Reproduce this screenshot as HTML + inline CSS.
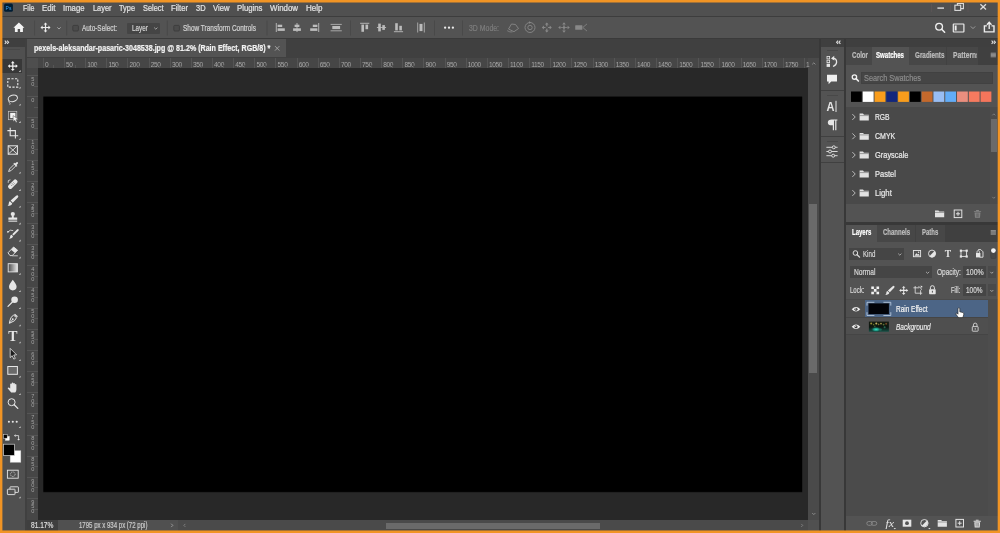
<!DOCTYPE html>
<html lang="en">
<head>
<meta charset="utf-8">
<title>Photoshop - Rain Effect</title>
<style>
html,body{margin:0;padding:0;}
body{width:1000px;height:533px;overflow:hidden;background:#f19424;position:relative;font-family:"Liberation Sans", sans-serif;}
.b{position:absolute;}
#txt{position:absolute;left:0;top:0;width:1000px;height:533px;will-change:transform;}
.t{position:absolute;white-space:pre;line-height:12px;height:12px;font-family:"Liberation Sans", sans-serif;transform-origin:0 50%;-webkit-text-stroke:0.22px currentColor;}
.r{position:absolute;font-size:6.6px;line-height:8px;color:#a6a6a6;white-space:pre;letter-spacing:-0.4px;}
.rv{position:absolute;font-size:5.6px;line-height:5px;height:5px;width:7px;text-align:center;color:#a2a2a2;}
svg{position:absolute;left:0;top:0;overflow:visible;}
</style>
</head>
<body>
<!-- panels & boxes -->
<div class="b" style="left:2.0px;top:2.0px;width:996.0px;height:36.0px;background:#535353;"></div>
<div class="b" style="left:2.0px;top:2.0px;width:996.0px;height:14.2px;background:#505050;"></div>
<div class="b" style="left:2.0px;top:16.2px;width:996.0px;height:1.0px;background:#3d3d3d;"></div>
<div class="b" style="left:127.0px;top:23.3px;width:33.2px;height:10.6px;background:#454545;border-radius:1px;"></div>
<div class="b" style="left:2.0px;top:38.0px;width:996.0px;height:19.6px;background:#404040;"></div>
<div class="b" style="left:2.0px;top:37.6px;width:996.0px;height:1.0px;background:#3a3a3a;"></div>
<div class="b" style="left:2.0px;top:47.0px;width:23.2px;height:484.0px;background:#505050;"></div>
<div class="b" style="left:2.0px;top:38.6px;width:23.2px;height:8.4px;background:#3f3f3f;"></div>
<div class="b" style="left:25.2px;top:38.6px;width:2.2px;height:492.4px;background:#404040;"></div>
<div class="b" style="left:2.0px;top:58.6px;width:20.0px;height:14.0px;background:#383838;"></div>
<div class="b" style="left:7.0px;top:49.0px;width:13.0px;height:1.0px;background:#484848;"></div>
<div class="b" style="left:27.4px;top:39.0px;width:258.6px;height:18.0px;background:#535353;"></div>
<div class="b" style="left:27.4px;top:57.6px;width:791.6px;height:10.8px;background:#464646;"></div>
<div class="b" style="left:27.4px;top:57.6px;width:10.4px;height:462.0px;background:#464646;"></div>
<div class="b" style="left:27.4px;top:57.6px;width:10.4px;height:10.8px;background:#4e4e4e;"></div>
<div class="b" style="left:37.8px;top:68.4px;width:770.2px;height:451.2px;background:#282828;"></div>
<div class="b" style="left:808.0px;top:57.6px;width:11.4px;height:462.0px;background:#4a4a4a;"></div>
<div class="b" style="left:808.8px;top:203.9px;width:8.2px;height:169.6px;background:#6a6a6a;"></div>
<div class="b" style="left:27.4px;top:519.6px;width:792.0px;height:11.4px;background:#505050;"></div>
<div class="b" style="left:27.4px;top:519.6px;width:30.6px;height:11.4px;background:#3f3f3f;"></div>
<div class="b" style="left:178.0px;top:519.6px;width:630.0px;height:11.4px;background:#4a4a4a;"></div>
<div class="b" style="left:386.0px;top:522.6px;width:214.0px;height:6.2px;background:#6a6a6a;"></div>
<div class="b" style="left:819.4px;top:38.6px;width:1.2px;height:492.4px;background:#383838;"></div>
<div class="b" style="left:820.6px;top:47.0px;width:23.6px;height:484.0px;background:#535353;"></div>
<div class="b" style="left:820.6px;top:38.6px;width:23.6px;height:8.4px;background:#3f3f3f;"></div>
<div class="b" style="left:844.2px;top:38.6px;width:1.8px;height:492.4px;background:#383838;"></div>
<div class="b" style="left:820.6px;top:90.2px;width:23.6px;height:1.0px;background:#404040;"></div>
<div class="b" style="left:820.6px;top:136.0px;width:23.6px;height:1.0px;background:#404040;"></div>
<div class="b" style="left:820.6px;top:162.0px;width:23.6px;height:1.0px;background:#404040;"></div>
<div class="b" style="left:826.5px;top:50.3px;width:11.5px;height:0.8px;background:#484848;"></div>
<div class="b" style="left:826.5px;top:95.0px;width:11.5px;height:0.8px;background:#484848;"></div>
<div class="b" style="left:826.5px;top:141.0px;width:11.5px;height:0.8px;background:#484848;"></div>
<div class="b" style="left:846.0px;top:38.6px;width:152.0px;height:8.4px;background:#3f3f3f;"></div>
<div class="b" style="left:846.0px;top:47.0px;width:152.0px;height:17.5px;background:#404040;"></div>
<div class="b" style="left:846.0px;top:47.0px;width:132.0px;height:17.5px;background:#474747;"></div>
<div class="b" style="left:946.0px;top:47.0px;width:1.0px;height:17.5px;background:#414141;"></div>
<div class="b" style="left:871.5px;top:47.0px;width:37.5px;height:17.5px;background:#535353;"></div>
<div class="b" style="left:846.0px;top:64.5px;width:152.0px;height:157.5px;background:#535353;"></div>
<div class="b" style="left:861.0px;top:72.0px;width:132.0px;height:12.2px;background:#454545;box-shadow:inset 0 0 0 1px #414141;"></div>
<div class="b" style="left:846.0px;top:106.7px;width:152.0px;height:96.9px;background:#494949;"></div>
<div class="b" style="left:990.4px;top:106.7px;width:7.6px;height:96.9px;background:#4c4c4c;"></div>
<div class="b" style="left:991.0px;top:119.0px;width:5.6px;height:33.0px;background:#6a6a6a;"></div>
<div class="b" style="left:846.0px;top:222.0px;width:152.0px;height:2.5px;background:#383838;"></div>
<div class="b" style="left:846.0px;top:224.5px;width:152.0px;height:17.5px;background:#404040;"></div>
<div class="b" style="left:846.0px;top:224.5px;width:99.0px;height:17.5px;background:#474747;"></div>
<div class="b" style="left:914.5px;top:224.5px;width:1.0px;height:17.5px;background:#414141;"></div>
<div class="b" style="left:846.0px;top:224.5px;width:30.8px;height:17.5px;background:#535353;"></div>
<div class="b" style="left:846.0px;top:242.0px;width:152.0px;height:289.0px;background:#535353;"></div>
<div class="b" style="left:846.0px;top:299.2px;width:152.0px;height:217.1px;background:#4b4b4b;"></div>
<div class="b" style="left:849.2px;top:248.0px;width:54.8px;height:12.2px;background:#454545;"></div>
<div class="b" style="left:850.0px;top:266.0px;width:82.0px;height:12.4px;background:#454545;"></div>
<div class="b" style="left:963.3px;top:266.0px;width:22.9px;height:12.4px;background:#454545;"></div>
<div class="b" style="left:963.3px;top:284.4px;width:22.9px;height:12.0px;background:#454545;"></div>
<div class="b" style="left:988.0px;top:266.0px;width:7.6px;height:12.4px;background:#4a4a4a;"></div>
<div class="b" style="left:988.0px;top:284.4px;width:7.6px;height:12.0px;background:#4a4a4a;"></div>
<div class="b" style="left:846.0px;top:300.4px;width:142.4px;height:16.7px;background:#4f4f4f;"></div>
<div class="b" style="left:865.4px;top:300.4px;width:123.0px;height:16.7px;background:#4c6586;"></div>
<div class="b" style="left:846.0px;top:317.6px;width:142.4px;height:16.2px;background:#4f4f4f;"></div>
<div class="b" style="left:846.0px;top:317.1px;width:142.4px;height:0.6px;background:#454545;"></div>
<div class="b" style="left:846.0px;top:333.8px;width:142.4px;height:0.6px;background:#454545;"></div>
<div class="b" style="left:988.4px;top:299.2px;width:9.6px;height:217.1px;background:#4d4d4d;"></div>
<svg width="1000" height="533" viewBox="0 0 1000 533"><rect x="43.36" y="97.2" width="758.8" height="395.6" fill="#000" opacity="0.25"/><rect x="43.36" y="96.56" width="758.8" height="395.31" fill="#000"/></svg>
<div id="txt">
<!-- rulers -->
<div class="b" style="left:42.8px;top:57.6px;width:1px;height:10.8px;background:#555555"></div>
<span class="r" style="left:45.0px;top:60.6px;">0</span>
<div class="b" style="left:63.9px;top:57.6px;width:1px;height:10.8px;background:#555555"></div>
<span class="r" style="left:66.1px;top:60.6px;">50</span>
<div class="b" style="left:85.1px;top:57.6px;width:1px;height:10.8px;background:#555555"></div>
<span class="r" style="left:87.3px;top:60.6px;">100</span>
<div class="b" style="left:106.2px;top:57.6px;width:1px;height:10.8px;background:#555555"></div>
<span class="r" style="left:108.4px;top:60.6px;">150</span>
<div class="b" style="left:127.4px;top:57.6px;width:1px;height:10.8px;background:#555555"></div>
<span class="r" style="left:129.6px;top:60.6px;">200</span>
<div class="b" style="left:148.5px;top:57.6px;width:1px;height:10.8px;background:#555555"></div>
<span class="r" style="left:150.7px;top:60.6px;">250</span>
<div class="b" style="left:169.7px;top:57.6px;width:1px;height:10.8px;background:#555555"></div>
<span class="r" style="left:171.9px;top:60.6px;">300</span>
<div class="b" style="left:190.8px;top:57.6px;width:1px;height:10.8px;background:#555555"></div>
<span class="r" style="left:193.0px;top:60.6px;">350</span>
<div class="b" style="left:211.9px;top:57.6px;width:1px;height:10.8px;background:#555555"></div>
<span class="r" style="left:214.1px;top:60.6px;">400</span>
<div class="b" style="left:233.1px;top:57.6px;width:1px;height:10.8px;background:#555555"></div>
<span class="r" style="left:235.3px;top:60.6px;">450</span>
<div class="b" style="left:254.2px;top:57.6px;width:1px;height:10.8px;background:#555555"></div>
<span class="r" style="left:256.4px;top:60.6px;">500</span>
<div class="b" style="left:275.4px;top:57.6px;width:1px;height:10.8px;background:#555555"></div>
<span class="r" style="left:277.6px;top:60.6px;">550</span>
<div class="b" style="left:296.5px;top:57.6px;width:1px;height:10.8px;background:#555555"></div>
<span class="r" style="left:298.7px;top:60.6px;">600</span>
<div class="b" style="left:317.6px;top:57.6px;width:1px;height:10.8px;background:#555555"></div>
<span class="r" style="left:319.8px;top:60.6px;">650</span>
<div class="b" style="left:338.8px;top:57.6px;width:1px;height:10.8px;background:#555555"></div>
<span class="r" style="left:341.0px;top:60.6px;">700</span>
<div class="b" style="left:359.9px;top:57.6px;width:1px;height:10.8px;background:#555555"></div>
<span class="r" style="left:362.1px;top:60.6px;">750</span>
<div class="b" style="left:381.1px;top:57.6px;width:1px;height:10.8px;background:#555555"></div>
<span class="r" style="left:383.3px;top:60.6px;">800</span>
<div class="b" style="left:402.2px;top:57.6px;width:1px;height:10.8px;background:#555555"></div>
<span class="r" style="left:404.4px;top:60.6px;">850</span>
<div class="b" style="left:423.4px;top:57.6px;width:1px;height:10.8px;background:#555555"></div>
<span class="r" style="left:425.6px;top:60.6px;">900</span>
<div class="b" style="left:444.5px;top:57.6px;width:1px;height:10.8px;background:#555555"></div>
<span class="r" style="left:446.7px;top:60.6px;">950</span>
<div class="b" style="left:465.6px;top:57.6px;width:1px;height:10.8px;background:#555555"></div>
<span class="r" style="left:467.8px;top:60.6px;">1000</span>
<div class="b" style="left:486.8px;top:57.6px;width:1px;height:10.8px;background:#555555"></div>
<span class="r" style="left:489.0px;top:60.6px;">1050</span>
<div class="b" style="left:507.9px;top:57.6px;width:1px;height:10.8px;background:#555555"></div>
<span class="r" style="left:510.1px;top:60.6px;">1100</span>
<div class="b" style="left:529.1px;top:57.6px;width:1px;height:10.8px;background:#555555"></div>
<span class="r" style="left:531.3px;top:60.6px;">1150</span>
<div class="b" style="left:550.2px;top:57.6px;width:1px;height:10.8px;background:#555555"></div>
<span class="r" style="left:552.4px;top:60.6px;">1200</span>
<div class="b" style="left:571.4px;top:57.6px;width:1px;height:10.8px;background:#555555"></div>
<span class="r" style="left:573.5px;top:60.6px;">1250</span>
<div class="b" style="left:592.5px;top:57.6px;width:1px;height:10.8px;background:#555555"></div>
<span class="r" style="left:594.7px;top:60.6px;">1300</span>
<div class="b" style="left:613.6px;top:57.6px;width:1px;height:10.8px;background:#555555"></div>
<span class="r" style="left:615.8px;top:60.6px;">1350</span>
<div class="b" style="left:634.8px;top:57.6px;width:1px;height:10.8px;background:#555555"></div>
<span class="r" style="left:637.0px;top:60.6px;">1400</span>
<div class="b" style="left:655.9px;top:57.6px;width:1px;height:10.8px;background:#555555"></div>
<span class="r" style="left:658.1px;top:60.6px;">1450</span>
<div class="b" style="left:677.1px;top:57.6px;width:1px;height:10.8px;background:#555555"></div>
<span class="r" style="left:679.3px;top:60.6px;">1500</span>
<div class="b" style="left:698.2px;top:57.6px;width:1px;height:10.8px;background:#555555"></div>
<span class="r" style="left:700.4px;top:60.6px;">1550</span>
<div class="b" style="left:719.3px;top:57.6px;width:1px;height:10.8px;background:#555555"></div>
<span class="r" style="left:721.5px;top:60.6px;">1600</span>
<div class="b" style="left:740.5px;top:57.6px;width:1px;height:10.8px;background:#555555"></div>
<span class="r" style="left:742.7px;top:60.6px;">1650</span>
<div class="b" style="left:761.6px;top:57.6px;width:1px;height:10.8px;background:#555555"></div>
<span class="r" style="left:763.8px;top:60.6px;">1700</span>
<div class="b" style="left:782.8px;top:57.6px;width:1px;height:10.8px;background:#555555"></div>
<span class="r" style="left:785.0px;top:60.6px;">1750</span>
<div class="b" style="left:803.9px;top:57.6px;width:1px;height:10.8px;background:#555555"></div>
<span class="r" style="left:806.1px;top:60.6px;">1</span>
<div class="b" style="left:27.4px;top:75.1px;width:10.4px;height:1px;background:#555555"></div>
<span class="rv" style="left:29.2px;top:76.9px;">5</span>
<span class="rv" style="left:29.2px;top:81.6px;">0</span>
<div class="b" style="left:27.4px;top:96.2px;width:10.4px;height:1px;background:#555555"></div>
<span class="rv" style="left:29.2px;top:98.0px;">0</span>
<div class="b" style="left:27.4px;top:117.3px;width:10.4px;height:1px;background:#555555"></div>
<span class="rv" style="left:29.2px;top:119.1px;">5</span>
<span class="rv" style="left:29.2px;top:123.8px;">0</span>
<div class="b" style="left:27.4px;top:138.5px;width:10.4px;height:1px;background:#555555"></div>
<span class="rv" style="left:29.2px;top:140.3px;">1</span>
<span class="rv" style="left:29.2px;top:145.0px;">0</span>
<span class="rv" style="left:29.2px;top:149.7px;">0</span>
<div class="b" style="left:27.4px;top:159.6px;width:10.4px;height:1px;background:#555555"></div>
<span class="rv" style="left:29.2px;top:161.4px;">1</span>
<span class="rv" style="left:29.2px;top:166.1px;">5</span>
<span class="rv" style="left:29.2px;top:170.8px;">0</span>
<div class="b" style="left:27.4px;top:180.8px;width:10.4px;height:1px;background:#555555"></div>
<span class="rv" style="left:29.2px;top:182.6px;">2</span>
<span class="rv" style="left:29.2px;top:187.3px;">0</span>
<span class="rv" style="left:29.2px;top:192.0px;">0</span>
<div class="b" style="left:27.4px;top:201.9px;width:10.4px;height:1px;background:#555555"></div>
<span class="rv" style="left:29.2px;top:203.7px;">2</span>
<span class="rv" style="left:29.2px;top:208.4px;">5</span>
<span class="rv" style="left:29.2px;top:213.1px;">0</span>
<div class="b" style="left:27.4px;top:223.1px;width:10.4px;height:1px;background:#555555"></div>
<span class="rv" style="left:29.2px;top:224.9px;">3</span>
<span class="rv" style="left:29.2px;top:229.6px;">0</span>
<span class="rv" style="left:29.2px;top:234.3px;">0</span>
<div class="b" style="left:27.4px;top:244.2px;width:10.4px;height:1px;background:#555555"></div>
<span class="rv" style="left:29.2px;top:246.0px;">3</span>
<span class="rv" style="left:29.2px;top:250.7px;">5</span>
<span class="rv" style="left:29.2px;top:255.4px;">0</span>
<div class="b" style="left:27.4px;top:265.3px;width:10.4px;height:1px;background:#555555"></div>
<span class="rv" style="left:29.2px;top:267.1px;">4</span>
<span class="rv" style="left:29.2px;top:271.8px;">0</span>
<span class="rv" style="left:29.2px;top:276.5px;">0</span>
<div class="b" style="left:27.4px;top:286.5px;width:10.4px;height:1px;background:#555555"></div>
<span class="rv" style="left:29.2px;top:288.3px;">4</span>
<span class="rv" style="left:29.2px;top:293.0px;">5</span>
<span class="rv" style="left:29.2px;top:297.7px;">0</span>
<div class="b" style="left:27.4px;top:307.6px;width:10.4px;height:1px;background:#555555"></div>
<span class="rv" style="left:29.2px;top:309.4px;">5</span>
<span class="rv" style="left:29.2px;top:314.1px;">0</span>
<span class="rv" style="left:29.2px;top:318.8px;">0</span>
<div class="b" style="left:27.4px;top:328.8px;width:10.4px;height:1px;background:#555555"></div>
<span class="rv" style="left:29.2px;top:330.6px;">5</span>
<span class="rv" style="left:29.2px;top:335.3px;">5</span>
<span class="rv" style="left:29.2px;top:340.0px;">0</span>
<div class="b" style="left:27.4px;top:349.9px;width:10.4px;height:1px;background:#555555"></div>
<span class="rv" style="left:29.2px;top:351.7px;">6</span>
<span class="rv" style="left:29.2px;top:356.4px;">0</span>
<span class="rv" style="left:29.2px;top:361.1px;">0</span>
<div class="b" style="left:27.4px;top:371.0px;width:10.4px;height:1px;background:#555555"></div>
<span class="rv" style="left:29.2px;top:372.8px;">6</span>
<span class="rv" style="left:29.2px;top:377.5px;">5</span>
<span class="rv" style="left:29.2px;top:382.2px;">0</span>
<div class="b" style="left:27.4px;top:392.2px;width:10.4px;height:1px;background:#555555"></div>
<span class="rv" style="left:29.2px;top:394.0px;">7</span>
<span class="rv" style="left:29.2px;top:398.7px;">0</span>
<span class="rv" style="left:29.2px;top:403.4px;">0</span>
<div class="b" style="left:27.4px;top:413.3px;width:10.4px;height:1px;background:#555555"></div>
<span class="rv" style="left:29.2px;top:415.1px;">7</span>
<span class="rv" style="left:29.2px;top:419.8px;">5</span>
<span class="rv" style="left:29.2px;top:424.5px;">0</span>
<div class="b" style="left:27.4px;top:434.5px;width:10.4px;height:1px;background:#555555"></div>
<span class="rv" style="left:29.2px;top:436.3px;">8</span>
<span class="rv" style="left:29.2px;top:441.0px;">0</span>
<span class="rv" style="left:29.2px;top:445.7px;">0</span>
<div class="b" style="left:27.4px;top:455.6px;width:10.4px;height:1px;background:#555555"></div>
<span class="rv" style="left:29.2px;top:457.4px;">8</span>
<span class="rv" style="left:29.2px;top:462.1px;">5</span>
<span class="rv" style="left:29.2px;top:466.8px;">0</span>
<div class="b" style="left:27.4px;top:476.8px;width:10.4px;height:1px;background:#555555"></div>
<span class="rv" style="left:29.2px;top:478.6px;">9</span>
<span class="rv" style="left:29.2px;top:483.3px;">0</span>
<span class="rv" style="left:29.2px;top:488.0px;">0</span>
<div class="b" style="left:27.4px;top:497.9px;width:10.4px;height:1px;background:#555555"></div>
<span class="rv" style="left:29.2px;top:499.7px;">9</span>
<span class="rv" style="left:29.2px;top:504.4px;">5</span>
<span class="rv" style="left:29.2px;top:509.1px;">0</span>
<div class="b" style="left:53.4px;top:64.6px;width:0.8px;height:3.8px;background:#565656"></div>
<div class="b" style="left:74.5px;top:64.6px;width:0.8px;height:3.8px;background:#565656"></div>
<div class="b" style="left:95.7px;top:64.6px;width:0.8px;height:3.8px;background:#565656"></div>
<div class="b" style="left:116.8px;top:64.6px;width:0.8px;height:3.8px;background:#565656"></div>
<div class="b" style="left:137.9px;top:64.6px;width:0.8px;height:3.8px;background:#565656"></div>
<div class="b" style="left:159.1px;top:64.6px;width:0.8px;height:3.8px;background:#565656"></div>
<div class="b" style="left:180.2px;top:64.6px;width:0.8px;height:3.8px;background:#565656"></div>
<div class="b" style="left:201.4px;top:64.6px;width:0.8px;height:3.8px;background:#565656"></div>
<div class="b" style="left:222.5px;top:64.6px;width:0.8px;height:3.8px;background:#565656"></div>
<div class="b" style="left:243.6px;top:64.6px;width:0.8px;height:3.8px;background:#565656"></div>
<div class="b" style="left:264.8px;top:64.6px;width:0.8px;height:3.8px;background:#565656"></div>
<div class="b" style="left:285.9px;top:64.6px;width:0.8px;height:3.8px;background:#565656"></div>
<div class="b" style="left:307.1px;top:64.6px;width:0.8px;height:3.8px;background:#565656"></div>
<div class="b" style="left:328.2px;top:64.6px;width:0.8px;height:3.8px;background:#565656"></div>
<div class="b" style="left:349.4px;top:64.6px;width:0.8px;height:3.8px;background:#565656"></div>
<div class="b" style="left:370.5px;top:64.6px;width:0.8px;height:3.8px;background:#565656"></div>
<div class="b" style="left:391.6px;top:64.6px;width:0.8px;height:3.8px;background:#565656"></div>
<div class="b" style="left:412.8px;top:64.6px;width:0.8px;height:3.8px;background:#565656"></div>
<div class="b" style="left:433.9px;top:64.6px;width:0.8px;height:3.8px;background:#565656"></div>
<div class="b" style="left:455.1px;top:64.6px;width:0.8px;height:3.8px;background:#565656"></div>
<div class="b" style="left:476.2px;top:64.6px;width:0.8px;height:3.8px;background:#565656"></div>
<div class="b" style="left:497.4px;top:64.6px;width:0.8px;height:3.8px;background:#565656"></div>
<div class="b" style="left:518.5px;top:64.6px;width:0.8px;height:3.8px;background:#565656"></div>
<div class="b" style="left:539.6px;top:64.6px;width:0.8px;height:3.8px;background:#565656"></div>
<div class="b" style="left:560.8px;top:64.6px;width:0.8px;height:3.8px;background:#565656"></div>
<div class="b" style="left:581.9px;top:64.6px;width:0.8px;height:3.8px;background:#565656"></div>
<div class="b" style="left:603.1px;top:64.6px;width:0.8px;height:3.8px;background:#565656"></div>
<div class="b" style="left:624.2px;top:64.6px;width:0.8px;height:3.8px;background:#565656"></div>
<div class="b" style="left:645.3px;top:64.6px;width:0.8px;height:3.8px;background:#565656"></div>
<div class="b" style="left:666.5px;top:64.6px;width:0.8px;height:3.8px;background:#565656"></div>
<div class="b" style="left:687.6px;top:64.6px;width:0.8px;height:3.8px;background:#565656"></div>
<div class="b" style="left:708.8px;top:64.6px;width:0.8px;height:3.8px;background:#565656"></div>
<div class="b" style="left:729.9px;top:64.6px;width:0.8px;height:3.8px;background:#565656"></div>
<div class="b" style="left:751.1px;top:64.6px;width:0.8px;height:3.8px;background:#565656"></div>
<div class="b" style="left:772.2px;top:64.6px;width:0.8px;height:3.8px;background:#565656"></div>
<div class="b" style="left:793.3px;top:64.6px;width:0.8px;height:3.8px;background:#565656"></div>
<div class="b" style="left:34px;top:85.6px;width:3.8px;height:0.8px;background:#565656"></div>
<div class="b" style="left:34px;top:106.8px;width:3.8px;height:0.8px;background:#565656"></div>
<div class="b" style="left:34px;top:127.9px;width:3.8px;height:0.8px;background:#565656"></div>
<div class="b" style="left:34px;top:149.1px;width:3.8px;height:0.8px;background:#565656"></div>
<div class="b" style="left:34px;top:170.2px;width:3.8px;height:0.8px;background:#565656"></div>
<div class="b" style="left:34px;top:191.3px;width:3.8px;height:0.8px;background:#565656"></div>
<div class="b" style="left:34px;top:212.5px;width:3.8px;height:0.8px;background:#565656"></div>
<div class="b" style="left:34px;top:233.6px;width:3.8px;height:0.8px;background:#565656"></div>
<div class="b" style="left:34px;top:254.8px;width:3.8px;height:0.8px;background:#565656"></div>
<div class="b" style="left:34px;top:275.9px;width:3.8px;height:0.8px;background:#565656"></div>
<div class="b" style="left:34px;top:297.0px;width:3.8px;height:0.8px;background:#565656"></div>
<div class="b" style="left:34px;top:318.2px;width:3.8px;height:0.8px;background:#565656"></div>
<div class="b" style="left:34px;top:339.3px;width:3.8px;height:0.8px;background:#565656"></div>
<div class="b" style="left:34px;top:360.5px;width:3.8px;height:0.8px;background:#565656"></div>
<div class="b" style="left:34px;top:381.6px;width:3.8px;height:0.8px;background:#565656"></div>
<div class="b" style="left:34px;top:402.8px;width:3.8px;height:0.8px;background:#565656"></div>
<div class="b" style="left:34px;top:423.9px;width:3.8px;height:0.8px;background:#565656"></div>
<div class="b" style="left:34px;top:445.0px;width:3.8px;height:0.8px;background:#565656"></div>
<div class="b" style="left:34px;top:466.2px;width:3.8px;height:0.8px;background:#565656"></div>
<div class="b" style="left:34px;top:487.3px;width:3.8px;height:0.8px;background:#565656"></div>
<div class="b" style="left:34px;top:508.5px;width:3.8px;height:0.8px;background:#565656"></div>
<!-- text -->
<span class="t" style="left:23.0px;top:2.3px;font-size:8.8px;color:#e2e2e2;transform:scaleX(0.8106);">File</span>
<span class="t" style="left:42.0px;top:2.3px;font-size:8.8px;color:#e2e2e2;transform:scaleX(0.8898);">Edit</span>
<span class="t" style="left:63.0px;top:2.3px;font-size:8.8px;color:#e2e2e2;transform:scaleX(0.8792);">Image</span>
<span class="t" style="left:92.5px;top:2.3px;font-size:8.8px;color:#e2e2e2;transform:scaleX(0.8403);">Layer</span>
<span class="t" style="left:119.0px;top:2.3px;font-size:8.8px;color:#e2e2e2;transform:scaleX(0.8387);">Type</span>
<span class="t" style="left:142.5px;top:2.3px;font-size:8.8px;color:#e2e2e2;transform:scaleX(0.8383);">Select</span>
<span class="t" style="left:170.5px;top:2.3px;font-size:8.8px;color:#e2e2e2;transform:scaleX(0.8690);">Filter</span>
<span class="t" style="left:195.5px;top:2.3px;font-size:8.8px;color:#e2e2e2;transform:scaleX(0.8444);">3D</span>
<span class="t" style="left:213.0px;top:2.3px;font-size:8.8px;color:#e2e2e2;transform:scaleX(0.8720);">View</span>
<span class="t" style="left:236.5px;top:2.3px;font-size:8.8px;color:#e2e2e2;transform:scaleX(0.8836);">Plugins</span>
<span class="t" style="left:270.0px;top:2.3px;font-size:8.8px;color:#e2e2e2;transform:scaleX(0.8947);">Window</span>
<span class="t" style="left:306.0px;top:2.3px;font-size:8.8px;color:#e2e2e2;transform:scaleX(0.9119);">Help</span>
<span class="t" style="left:82.0px;top:22.0px;font-size:8.8px;color:#d2d2d2;transform:scaleX(0.7304);">Auto-Select:</span>
<span class="t" style="left:132.0px;top:22.0px;font-size:8.8px;color:#d2d2d2;transform:scaleX(0.7177);">Layer</span>
<span class="t" style="left:183.0px;top:22.0px;font-size:8.8px;color:#d2d2d2;transform:scaleX(0.7355);">Show Transform Controls</span>
<span class="t" style="left:469.0px;top:22.0px;font-size:8.8px;color:#7c7c7c;transform:scaleX(0.7866);">3D Mode:</span>
<span class="t" style="left:33.7px;top:42.3px;font-size:8.8px;color:#f2f2f2;transform:scaleX(0.8061);font-weight:bold;">pexels-aleksandar-pasaric-3048538.jpg @ 81.2% (Rain Effect, RGB/8) *</span>
<span class="t" style="left:30.6px;top:519.3px;font-size:8.8px;color:#dcdcdc;transform:scaleX(0.7506);">81.17%</span>
<span class="t" style="left:78.8px;top:519.3px;font-size:8.4px;color:#c8c8c8;transform:scaleX(0.7237);">1795 px x 934 px (72 ppi)</span>
<span class="t" style="left:852.0px;top:48.7px;font-size:8.8px;color:#bdbdbd;transform:scaleX(0.6966);font-weight:bold;">Color</span>
<span class="t" style="left:876.0px;top:48.7px;font-size:8.8px;color:#ffffff;transform:scaleX(0.6898);font-weight:bold;">Swatches</span>
<span class="t" style="left:915.0px;top:48.7px;font-size:8.8px;color:#bdbdbd;transform:scaleX(0.7181);font-weight:bold;">Gradients</span>
<div class="b" style="left:952.5px;top:48.7px;width:24.1px;height:12px;overflow:hidden"><span class="t" style="left:0;top:0;font-size:8.8px;color:#bdbdbd;transform:scaleX(0.7613);font-weight:bold;">Patterns</span></div>
<span class="t" style="left:864.0px;top:72.0px;font-size:9.2px;color:#8c8c8c;transform:scaleX(0.7972);">Search Swatches</span>
<span class="t" style="left:875.2px;top:111.0px;font-size:8.8px;color:#e8e8e8;transform:scaleX(0.7653);">RGB</span>
<span class="t" style="left:875.2px;top:130.3px;font-size:8.8px;color:#e8e8e8;transform:scaleX(0.7985);">CMYK</span>
<span class="t" style="left:875.2px;top:149.0px;font-size:8.8px;color:#e8e8e8;transform:scaleX(0.8458);">Grayscale</span>
<span class="t" style="left:875.2px;top:168.0px;font-size:8.8px;color:#e8e8e8;transform:scaleX(0.8506);">Pastel</span>
<span class="t" style="left:875.2px;top:187.0px;font-size:8.8px;color:#e8e8e8;transform:scaleX(0.8806);">Light</span>
<span class="t" style="left:852.0px;top:226.0px;font-size:8.8px;color:#ffffff;transform:scaleX(0.6802);font-weight:bold;">Layers</span>
<span class="t" style="left:882.7px;top:226.0px;font-size:8.8px;color:#bdbdbd;transform:scaleX(0.6842);font-weight:bold;">Channels</span>
<span class="t" style="left:922.0px;top:226.0px;font-size:8.8px;color:#bdbdbd;transform:scaleX(0.6801);font-weight:bold;">Paths</span>
<span class="t" style="left:862.7px;top:248.0px;font-size:8.8px;color:#d6d6d6;transform:scaleX(0.6985);">Kind</span>
<span class="t" style="left:853.5px;top:266.2px;font-size:8.8px;color:#d6d6d6;transform:scaleX(0.7581);">Normal</span>
<span class="t" style="left:936.5px;top:266.2px;font-size:8.8px;color:#d6d6d6;transform:scaleX(0.7404);">Opacity:</span>
<span class="t" style="left:965.8px;top:266.2px;font-size:8.8px;color:#d6d6d6;transform:scaleX(0.7911);">100%</span>
<span class="t" style="left:850.4px;top:284.4px;font-size:8.8px;color:#d6d6d6;transform:scaleX(0.6847);">Lock:</span>
<span class="t" style="left:950.9px;top:284.4px;font-size:8.8px;color:#d6d6d6;transform:scaleX(0.6648);">Fill:</span>
<span class="t" style="left:966.4px;top:284.4px;font-size:8.8px;color:#d6d6d6;transform:scaleX(0.7333);">100%</span>
<span class="t" style="left:895.7px;top:303.3px;font-size:8.8px;color:#f0f0f0;transform:scaleX(0.7347);">Rain Effect</span>
<span class="t" style="left:895.7px;top:320.7px;font-size:8.8px;color:#e6e6e6;transform:scaleX(0.7390);font-style:italic;">Background</span>
</div>
<!-- icons -->
<svg width="1000" height="533" viewBox="0 0 1000 533">
<rect x="4.1" y="3.6" width="8.8" height="8.2" rx="1.6" fill="#001d34"/>
<text x="5.6" y="10" font-family="Liberation Sans, sans-serif" font-size="6" fill="#39aaff" textLength="5.8" lengthAdjust="spacingAndGlyphs">Ps</text>
<path d="M937.4 8.1H944" stroke="#dcdcdc" stroke-width="1.4"/>
<rect x="954.9" y="5.2" width="5.8" height="5.2" fill="none" stroke="#dcdcdc" stroke-width="1.1"/>
<path d="M957.4 5.2V3.5H963.4V8.6H960.9" fill="none" stroke="#dcdcdc" stroke-width="1.1"/>
<path d="M980.4 4.2L986 9.4M986 4.2L980.4 9.4" stroke="#dcdcdc" stroke-width="1.3"/>
<path d="M931.5 4V12M950.5 4V12M968 4V12" stroke="#66595a" stroke-width="0.6" opacity="0.8"/>
<g transform="translate(18.90 27.50)" ><path d="M0 -4.9L5.5 0.2H4V4.6H1.2V1.4H-1.2V4.6H-4V0.2H-5.5Z" fill="#f4f4f4"/></g>
<path d="M34.6 20.5V35.5" stroke="#494949" stroke-width="1"/>
<path d="M66.7 20.5V35.5" stroke="#494949" stroke-width="1"/>
<path d="M167.3 20.5V35.5" stroke="#494949" stroke-width="1"/>
<path d="M267 20.5V35.5" stroke="#494949" stroke-width="1"/>
<path d="M350.5 20.5V35.5" stroke="#494949" stroke-width="1"/>
<path d="M434.5 20.5V35.5" stroke="#494949" stroke-width="1"/>
<path d="M462.5 20.5V35.5" stroke="#494949" stroke-width="1"/>
<g transform="translate(45.50 27.50)" ><path d="M0 -5L1.9 -2.9H0.6V-0.6H2.9V-1.9L5 0L2.9 1.9V0.6H0.6V2.9H1.9L0 5L-1.9 2.9H-0.6V0.6H-2.9V1.9L-5 0L-2.9 -1.9V-0.6H-0.6V-2.9H-1.9Z" fill="#ececec"/></g>
<g transform="translate(59.00 28.20)" ><path d="M-1.7 -0.85L0 0.85L1.7 -0.85" fill="none" stroke="#b0b0b0" stroke-width="0.9"/></g>
<rect x="72.8" y="25.4" width="5.6" height="5.6" rx="1" fill="#4b4b4b" stroke="#3a3a3a" stroke-width="0.8"/>
<rect x="173.79999999999998" y="25.4" width="5.6" height="5.6" rx="1" fill="#4b4b4b" stroke="#3a3a3a" stroke-width="0.8"/>
<g transform="translate(155.80 28.40)" ><path d="M-1.6 -0.8L0 0.8L1.6 -0.8" fill="none" stroke="#b0b0b0" stroke-width="0.9"/></g>
<g transform="translate(280.50 27.50)" ><path d="M-4.2 -4.5V4.5" stroke="#bcbcbc" stroke-width="0.9"/><rect x="-2.9" y="-2.8" width="4.6" height="2.3" fill="#bcbcbc"/><rect x="-2.9" y="0.8" width="7.2" height="2.6" fill="#bcbcbc"/></g>
<g transform="translate(297.00 27.50)" ><path d="M0 -4.5V4.5" stroke="#bcbcbc" stroke-width="0.9"/><rect x="-2.4" y="-2.8" width="4.8" height="2.3" fill="#bcbcbc"/><rect x="-3.9" y="0.8" width="7.8" height="2.6" fill="#bcbcbc"/></g>
<g transform="translate(314.50 27.50)" ><path d="M4.2 -4.5V4.5" stroke="#bcbcbc" stroke-width="0.9"/><rect x="-1.7" y="-2.8" width="4.6" height="2.3" fill="#bcbcbc"/><rect x="-4.3" y="0.8" width="7.2" height="2.6" fill="#bcbcbc"/></g>
<g transform="translate(336.20 27.50)" ><path d="M-5.6 -3.1H5.6M-5.6 3.3H5.6" stroke="#bcbcbc" stroke-width="0.8"/><rect x="-3.9" y="-1.5" width="7.8" height="3.1" fill="#bcbcbc"/></g>
<g transform="translate(364.70 27.50)" ><path d="M-4.6 -4.2H4.6" stroke="#bcbcbc" stroke-width="0.9"/><rect x="-3.3" y="-2.9" width="2.6" height="7.2" fill="#bcbcbc"/><rect x="0.8" y="-2.9" width="2.6" height="4.6" fill="#bcbcbc"/></g>
<g transform="translate(381.50 27.50)" ><path d="M-4.6 0H4.6" stroke="#bcbcbc" stroke-width="0.9"/><rect x="-3.3" y="-3.9" width="2.6" height="7.8" fill="#bcbcbc"/><rect x="0.8" y="-2.4" width="2.6" height="4.8" fill="#bcbcbc"/></g>
<g transform="translate(398.50 27.50)" ><path d="M-4.6 4.2H4.6" stroke="#bcbcbc" stroke-width="0.9"/><rect x="-3.3" y="-4.3" width="2.6" height="7.2" fill="#bcbcbc"/><rect x="0.8" y="-1.7" width="2.6" height="4.6" fill="#bcbcbc"/></g>
<g transform="translate(421.00 27.50)" ><path d="M-3.3 -5V5M3.3 -5V5" stroke="#bcbcbc" stroke-width="0.8"/><rect x="-1.5" y="-3.6" width="3" height="7.2" fill="#bcbcbc"/></g>
<circle cx="445.1" cy="27.7" r="1.15" fill="#ececec"/>
<circle cx="449" cy="27.7" r="1.15" fill="#ececec"/>
<circle cx="452.9" cy="27.7" r="1.15" fill="#ececec"/>
<g transform="translate(513.00 27.50)" ><path d="M-4.5 1.5L-1.5 -3.5L2.5 -3L5.5 1L1 4.2Z" fill="none" stroke="#888888" stroke-width="0.9"/><path d="M-5.8 3.2Q-3 5 -0.5 4.4" fill="none" stroke="#888888" stroke-width="0.8"/></g>
<g transform="translate(530.00 27.50)" ><circle r="5" fill="none" stroke="#888888" stroke-width="0.9"/><circle r="2.2" fill="none" stroke="#888888" stroke-width="0.9"/><path d="M-1 -6.2L1.2 -5L-1 -3.8Z" fill="#888888"/></g>
<g transform="translate(546.80 27.50)" ><path d="M0 -5L1.9 -2.9H0.6V-0.6H2.9V-1.9L5 0L2.9 1.9V0.6H0.6V2.9H1.9L0 5L-1.9 2.9H-0.6V0.6H-2.9V1.9L-5 0L-2.9 -1.9V-0.6H-0.6V-2.9H-1.9Z" fill="#888888"/><circle r="1.3" fill="#535353"/></g>
<g transform="translate(564.00 27.50)" ><path d="M0 -5.2L1.8 -3H-1.8ZM0 5.2L1.8 3H-1.8ZM-5.8 0L-3.6 -1.8V1.8ZM5.8 0L3.6 -1.8V1.8Z" fill="#888888"/><path d="M0 -3V3M-3.6 0H3.6" stroke="#888888" stroke-width="0.8"/><circle r="1.2" fill="#888888"/></g>
<g transform="translate(581.20 27.50)" ><rect x="-6" y="-2.3" width="7.2" height="4.6" rx="0.6" fill="#888888"/><path d="M1.6 0L5.8 -3.6M1.6 0L5.8 3.6" stroke="#888888" stroke-width="0.8"/></g>
<g transform="translate(939.70 27.30)" ><circle cx="-0.6" cy="-0.6" r="3.4" fill="none" stroke="#eeeeee" stroke-width="1.3"/><path d="M2 2L4.9 4.9" stroke="#eeeeee" stroke-width="1.6" stroke-linecap="round"/></g>
<g transform="translate(958.60 28.00)" ><rect x="-5.3" y="-4" width="10.6" height="8" rx="0.5" fill="#5a5a5a" stroke="#eeeeee" stroke-width="1.2"/><rect x="-3.9" y="-2.5" width="1.9" height="5" fill="#eeeeee"/></g>
<g transform="translate(973.00 27.50)" ><path d="M-2.2 -1.1L0 1.1L2.2 -1.1" fill="none" stroke="#a4a4a4" stroke-width="0.9"/></g>
<g transform="translate(989.20 27.30)" ><path d="M-2.3 -1.4H-4.8V4.6H4.8V-1.4H2.3" fill="none" stroke="#eeeeee" stroke-width="1.4"/><path d="M0 1.8V-4.4M-2.3 -2.6L0 -5L2.3 -2.6" fill="none" stroke="#eeeeee" stroke-width="1.3"/></g>
<path d="M275 46.1L279.4 50.6M279.4 46.1L275 50.6" stroke="#b2b2b2" stroke-width="0.8"/>
<path d="M4.8 40.6L6.3 42.2L4.8 43.8M7.1 40.6L8.6 42.2L7.1 43.8" fill="none" stroke="#dedede" stroke-width="1.1"/>
<path d="M838.1 40.6L836.6 42.2L838.1 43.8M840.4 40.6L838.9 42.2L840.4 43.8" fill="none" stroke="#dedede" stroke-width="1.1"/>
<path d="M991.6 40.6L993.1 42.2L991.6 43.8M993.9 40.6L995.4 42.2L993.9 43.8" fill="none" stroke="#dedede" stroke-width="1.1"/>
<g transform="translate(12.80 66.10)" ><path d="M0 -5L1.9 -2.9H0.6V-0.6H2.9V-1.9L5 0L2.9 1.9V0.6H0.6V2.9H1.9L0 5L-1.9 2.9H-0.6V0.6H-2.9V1.9L-5 0L-2.9 -1.9V-0.6H-0.6V-2.9H-1.9Z" fill="#f2f2f2"/></g>
<g transform="translate(19.00 70.30)" ><path d="M1.6 -0.2V1.6H-0.2Z" fill="#d0d0d0"/></g>
<g transform="translate(12.80 82.90)" ><rect x="-5" y="-4.2" width="10" height="8.4" fill="none" stroke="#e6e6e6" stroke-width="1.1" stroke-dasharray="2.2 1.4"/></g>
<g transform="translate(19.00 87.00)" ><path d="M1.6 -0.2V1.6H-0.2Z" fill="#d0d0d0"/></g>
<g transform="translate(12.80 99.40)" ><ellipse cx="0.3" cy="-1" rx="4.7" ry="3.2" fill="none" stroke="#e6e6e6" stroke-width="1" transform="rotate(-15)"/><path d="M-3.6 1.2Q-4.6 2.6 -3.2 3.4Q-2.4 4 -3 5.2" fill="none" stroke="#e6e6e6" stroke-width="0.8"/></g>
<g transform="translate(19.00 104.00)" ><path d="M1.6 -0.2V1.6H-0.2Z" fill="#d0d0d0"/></g>
<g transform="translate(12.80 116.60)" ><rect x="-4.4" y="-5.3" width="8.4" height="8.4" fill="none" stroke="#c4c4c4" stroke-width="0.7"/><rect x="-2.6" y="-3.7" width="5.2" height="5.2" fill="#f2f2f2"/><path d="M0.3 -1L5.4 2.6L3.2 3L4.4 5.4L3.2 6L2 3.6L0.4 5Z" fill="#f4f4f4" stroke="#505050" stroke-width="0.5"/></g>
<g transform="translate(19.00 121.30)" ><path d="M1.6 -0.2V1.6H-0.2Z" fill="#d0d0d0"/></g>
<g transform="translate(12.80 133.20)" ><path d="M-2.6 -5.4V2.6H5.4M-5.4 -2.6H2.6V5.4" fill="none" stroke="#e6e6e6" stroke-width="1.1"/></g>
<g transform="translate(19.00 138.20)" ><path d="M1.6 -0.2V1.6H-0.2Z" fill="#d0d0d0"/></g>
<g transform="translate(12.80 150.00)" ><rect x="-4.6" y="-4.2" width="9.2" height="8.4" fill="none" stroke="#e6e6e6" stroke-width="1"/><path d="M-4.6 -4.2L4.6 4.2M4.6 -4.2L-4.6 4.2" stroke="#e6e6e6" stroke-width="0.9"/></g>
<g transform="translate(13.20 166.90)" ><path d="M-4.6 4.6L-3.6 2L1 -2.6L2.6 -1L-2 3.6Z" fill="none" stroke="#e6e6e6" stroke-width="0.9"/><path d="M0.2 -3.4L3.4 -0.2L4.2 -1L3.3 -1.9Q5.6 -3.6 4.6 -4.6Q3.6 -5.6 1.9 -3.3L1 -4.2Z" fill="#e6e6e6"/></g>
<g transform="translate(19.00 172.00)" ><path d="M1.6 -0.2V1.6H-0.2Z" fill="#d0d0d0"/></g>
<g transform="translate(12.80 184.20)" ><rect x="-5.6" y="-2.2" width="11.2" height="4.4" rx="1.8" fill="#e6e6e6" transform="rotate(-45)"/><path d="M-1 -1L1 1M-1.8 0.6L-0.6 1.8M0.6 -1.8L1.8 -0.6" stroke="#535353" stroke-width="0.6"/><path d="M-4.6 -1.4Q-5.4 -4.4 -2.4 -4.4" fill="none" stroke="#e6e6e6" stroke-width="0.8"/></g>
<g transform="translate(19.00 189.30)" ><path d="M1.6 -0.2V1.6H-0.2Z" fill="#d0d0d0"/></g>
<g transform="translate(12.80 200.80)" ><path d="M5.1 -5.3Q6 -4.4 5.1 -3.3L0 2L-2.2 -0.2L3.3 -5.1Q4.3 -6 5.1 -5.3Z" fill="#e6e6e6"/><path d="M-2.8 0.4L-0.6 2.6Q-1 5 -5.2 5Q-3.8 3.6 -4 2.2Q-3.9 0.7 -2.8 0.4Z" fill="#e6e6e6"/></g>
<g transform="translate(19.00 206.00)" ><path d="M1.6 -0.2V1.6H-0.2Z" fill="#d0d0d0"/></g>
<g transform="translate(12.80 217.20)" ><circle cy="-3.2" r="2.1" fill="#e6e6e6"/><path d="M-1 -2H1V0.4H4.4V2.6H-4.4V0.4H-1Z" fill="#e6e6e6"/><rect x="-4.4" y="3.4" width="8.8" height="1.1" fill="#e6e6e6"/></g>
<g transform="translate(19.00 222.80)" ><path d="M1.6 -0.2V1.6H-0.2Z" fill="#d0d0d0"/></g>
<g transform="translate(13.40 234.40)" ><path d="M5 -5.2Q5.8 -4.4 5 -3.6L0.2 1.2L-1.2 -0.2L3.6 -5Q4.4 -5.8 5 -5.2Z" fill="#e6e6e6"/><path d="M-1.8 0.4L-0.4 1.8Q-0.8 4.2 -4.4 4.4Q-3 3 -3.2 1.8Q-3 0.6 -1.8 0.4Z" fill="#e6e6e6"/><path d="M-5.6 -2.2Q-3.4 -5.4 -0.2 -3.8" fill="none" stroke="#e6e6e6" stroke-width="0.8"/><path d="M-6.4 -3.4L-4.2 -3.2L-5.6 -1.2Z" fill="#e6e6e6"/></g>
<g transform="translate(19.00 239.80)" ><path d="M1.6 -0.2V1.6H-0.2Z" fill="#d0d0d0"/></g>
<g transform="translate(12.80 251.40)" ><path d="M-4.8 1.4L0.8 -4.4L4.8 -1.2L-0.6 4.2H-2.8Z" fill="none" stroke="#e6e6e6" stroke-width="0.9"/><path d="M0.8 -4.4L4.8 -1.2L2.2 1.6L-1.8 -1.6Z" fill="#e6e6e6"/><path d="M-0.6 4.4H5" stroke="#e6e6e6" stroke-width="0.8"/></g>
<g transform="translate(19.00 256.80)" ><path d="M1.6 -0.2V1.6H-0.2Z" fill="#d0d0d0"/></g>
<defs><linearGradient id="gr" x1="0" x2="1" y1="0" y2="0"><stop offset="0" stop-color="#4a4a4a"/><stop offset="1" stop-color="#e6e6e6"/></linearGradient></defs>
<g transform="translate(12.80 267.80)" ><rect x="-4.6" y="-4.1" width="9.2" height="8.2" fill="url(#gr)" stroke="#e6e6e6" stroke-width="0.9"/></g>
<g transform="translate(19.00 273.20)" ><path d="M1.6 -0.2V1.6H-0.2Z" fill="#d0d0d0"/></g>
<g transform="translate(12.80 284.80)" ><path d="M0 -5C1.6 -2.4 3.8 -0.4 3.8 1.8A3.8 3.8 0 0 1 -3.8 1.8C-3.8 -0.4 -1.6 -2.4 0 -5Z" fill="#e6e6e6"/></g>
<g transform="translate(19.00 290.40)" ><path d="M1.6 -0.2V1.6H-0.2Z" fill="#d0d0d0"/></g>
<g transform="translate(12.80 301.60)" ><circle cx="1.8" cy="-1.8" r="3.3" fill="#e6e6e6"/><path d="M-0.4 0.4L-4.8 4.8" stroke="#e6e6e6" stroke-width="1.2" stroke-linecap="round"/></g>
<g transform="translate(19.00 307.40)" ><path d="M1.6 -0.2V1.6H-0.2Z" fill="#d0d0d0"/></g>
<g transform="translate(12.80 319.20)" ><g transform="rotate(40)"><path d="M-1.9 -5.6H1.9V-4.2H-1.9Z" fill="#e6e6e6"/><path d="M-1.9 -3.6H1.9Q3.6 -0.6 0 5.4Q-3.6 -0.6 -1.9 -3.6Z" fill="none" stroke="#e6e6e6" stroke-width="0.9"/><path d="M0 5V0.6" stroke="#e6e6e6" stroke-width="0.7"/><circle cy="0" r="0.9" fill="#e6e6e6"/></g></g>
<g transform="translate(19.00 324.60)" ><path d="M1.6 -0.2V1.6H-0.2Z" fill="#d0d0d0"/></g>
<text x="12.8" y="341.1" text-anchor="middle" font-family="Liberation Serif, serif" font-weight="bold" font-size="13.8" fill="#e6e6e6">T</text>
<g transform="translate(19.00 341.60)" ><path d="M1.6 -0.2V1.6H-0.2Z" fill="#d0d0d0"/></g>
<g transform="translate(12.80 353.80)" ><path d="M-2.6 -5.4L3.8 1L0.9 1.2L2.5 4.6L1 5.3L-0.6 1.9L-2.6 3.8Z" fill="#1c1c1c" stroke="#e6e6e6" stroke-width="0.8"/></g>
<g transform="translate(19.00 359.40)" ><path d="M1.6 -0.2V1.6H-0.2Z" fill="#d0d0d0"/></g>
<g transform="translate(12.60 370.40)" ><rect x="-4.8" y="-3.9" width="9.6" height="7.8" fill="#6a6a6a" stroke="#e6e6e6" stroke-width="1"/></g>
<g transform="translate(19.00 376.00)" ><path d="M1.6 -0.2V1.6H-0.2Z" fill="#d0d0d0"/></g>
<g transform="translate(12.80 387.60)" ><path d="M-1.6 5Q-3 3.4 -5 1Q-5.4 0 -4.4 -0.2Q-3.6 -0.2 -2.6 1V-3.4Q-2.5 -4.2 -1.8 -4.2Q-1.2 -4.2 -1.1 -3.4V-4.4Q-1 -5.2 -0.3 -5.2Q0.4 -5.2 0.5 -4.4V-3.8Q0.6 -4.6 1.3 -4.6Q2 -4.6 2.1 -3.8V-2.8Q2.2 -3.6 2.9 -3.6Q3.6 -3.6 3.6 -2.8V1.8Q3.6 3.6 2.4 5Z" fill="#e6e6e6"/></g>
<g transform="translate(19.00 393.40)" ><path d="M1.6 -0.2V1.6H-0.2Z" fill="#d0d0d0"/></g>
<g transform="translate(12.80 403.60)" ><circle cx="-1.2" cy="-1.4" r="3.5" fill="none" stroke="#e6e6e6" stroke-width="1"/><path d="M1.4 1.2L5 4.8" stroke="#e6e6e6" stroke-width="1.3" stroke-linecap="round"/></g>
<circle cx="8.9" cy="421.8" r="1.05" fill="#e6e6e6"/>
<circle cx="12.8" cy="421.8" r="1.05" fill="#e6e6e6"/>
<circle cx="16.7" cy="421.8" r="1.05" fill="#e6e6e6"/>
<g transform="translate(19.00 426.40)" ><path d="M1.6 -0.2V1.6H-0.2Z" fill="#d0d0d0"/></g>
<rect x="5.6" y="436.6" width="3.6" height="3.6" fill="#fff" stroke="#fff" stroke-width="0.5"/>
<rect x="3.6" y="434.6" width="3.6" height="3.6" fill="#000" stroke="#ddd" stroke-width="0.5"/>
<path d="M15.4 435.6H18.6V439.2" fill="none" stroke="#e6e6e6" stroke-width="0.8"/><path d="M15.6 434.2L14 435.6L15.6 437ZM17.2 439L18.6 440.6L20 439Z" fill="#e6e6e6"/>
<rect x="10.2" y="450.8" width="10.6" height="11.4" fill="#ffffff" stroke="#d8d8d8" stroke-width="0.5"/>
<rect x="3.6" y="444.2" width="10.8" height="11.2" fill="#000000" stroke="#cfcfcf" stroke-width="0.7"/>
<g transform="translate(12.80 474.20)" ><rect x="-5.4" y="-4" width="10.8" height="8" fill="none" stroke="#e6e6e6" stroke-width="0.9"/><circle r="2.3" fill="none" stroke="#e6e6e6" stroke-width="0.7" stroke-dasharray="1 0.6"/></g>
<g transform="translate(12.80 490.80)" ><rect x="-2.8" y="-4" width="8.4" height="5.6" rx="0.5" fill="#505050" stroke="#e6e6e6" stroke-width="0.9"/><rect x="-5.4" y="-1.6" width="7.6" height="5.4" rx="0.5" fill="#535353" stroke="#e6e6e6" stroke-width="0.9"/></g>
<g transform="translate(19.00 496.60)" ><path d="M1.6 -0.2V1.6H-0.2Z" fill="#d0d0d0"/></g>
<g transform="translate(832.00 61.70)" ><rect x="-5" y="-5.2" width="2.6" height="2.4" fill="none" stroke="#e6e6e6" stroke-width="0.8"/><rect x="-5" y="-1.5" width="2.6" height="2.4" fill="none" stroke="#e6e6e6" stroke-width="0.8"/><rect x="-5.4" y="2" width="3.4" height="3.2" fill="#e6e6e6"/><path d="M0.6 -3.2Q4.8 -3.6 4.6 0.6Q4.4 3.6 1 4.8" fill="none" stroke="#e6e6e6" stroke-width="1.3"/><path d="M2.2 -6L-1 -3.2L2.4 -1.2Z" fill="#e6e6e6"/></g>
<g transform="translate(832.00 79.40)" ><path d="M-5 -4.6H5V2H-0.8L-3.4 4.8V2H-5Z" fill="#f0f0f0"/></g>
<text x="826.4" y="111.2" font-family="Liberation Sans, sans-serif" font-weight="bold" font-size="12.6" fill="#e6e6e6" textLength="8" lengthAdjust="spacingAndGlyphs">A</text>
<path d="M836 100.8V112" stroke="#e6e6e6" stroke-width="1"/>
<g transform="translate(832.40 124.90)" ><path d="M-0.6 -5.4H5V-4.3H4V5.4H2.8V-4.3H1.6V5.4H0.4V0.4H-0.6Q-4.6 0.4 -4.6 -2.5Q-4.6 -5.4 -0.6 -5.4Z" fill="#e6e6e6"/></g>
<g transform="translate(832.00 151.50)" ><path d="M-5.6 -4.2H5.6M-5.6 0H5.6M-5.6 4.2H5.6" stroke="#e6e6e6" stroke-width="0.9"/><circle cx="1.8" cy="-4.2" r="1.5" fill="#535353" stroke="#e6e6e6" stroke-width="0.9"/><circle cx="-2" cy="0" r="1.5" fill="#535353" stroke="#e6e6e6" stroke-width="0.9"/><circle cx="1.2" cy="4.2" r="1.5" fill="#535353" stroke="#e6e6e6" stroke-width="0.9"/></g>
<rect x="851.00" y="91.5" width="10.8" height="10.4" fill="#000000"/>
<rect x="862.78" y="91.5" width="10.8" height="10.4" fill="#ffffff"/>
<rect x="874.56" y="91.5" width="10.8" height="10.4" fill="#f99d1c"/>
<rect x="886.34" y="91.5" width="10.8" height="10.4" fill="#12267d"/>
<rect x="898.12" y="91.5" width="10.8" height="10.4" fill="#f99d1c"/>
<rect x="909.90" y="91.5" width="10.8" height="10.4" fill="#000000"/>
<rect x="921.68" y="91.5" width="10.8" height="10.4" fill="#c4692c"/>
<rect x="933.46" y="91.5" width="10.8" height="10.4" fill="#98bdf3"/>
<rect x="945.24" y="91.5" width="10.8" height="10.4" fill="#62acf7"/>
<rect x="957.02" y="91.5" width="10.8" height="10.4" fill="#ea8e7e"/>
<rect x="968.80" y="91.5" width="10.8" height="10.4" fill="#f67a5f"/>
<rect x="980.58" y="91.5" width="10.8" height="10.4" fill="#f5755b"/>
<g transform="translate(993.30 55.00)" ><path d="M-2.6 -1.8H2.6M-2.6 -0.6H2.6M-2.6 0.6H2.6M-2.6 1.8H2.6" stroke="#b8b8b8" stroke-width="0.7"/></g>
<g transform="translate(855.20 77.80)" ><circle cx="-0.77" cy="-0.77" r="2.2" fill="none" stroke="#f0f0f0" stroke-width="1.3"/><path d="M0.88 0.88L3.19 3.19" stroke="#f0f0f0" stroke-width="1.69" stroke-linecap="round"/></g>
<g transform="translate(853.80 117.00)" ><path d="M-1.45 -2.9L1.45 0L-1.45 2.9" fill="none" stroke="#c6c6c6" stroke-width="0.9"/></g>
<g transform="translate(864.20 117.00)" style="transform-origin:0 0"><path d="M-4.6 -3.4H-1.2L-0.2 -2.3H4.6V3.4H-4.6Z" fill="#e2e2e2"/><path d="M-4.6 -1.4H4.6" stroke="#535353" stroke-width="0.5"/></g>
<g transform="translate(853.80 136.30)" ><path d="M-1.45 -2.9L1.45 0L-1.45 2.9" fill="none" stroke="#c6c6c6" stroke-width="0.9"/></g>
<g transform="translate(864.20 136.30)" style="transform-origin:0 0"><path d="M-4.6 -3.4H-1.2L-0.2 -2.3H4.6V3.4H-4.6Z" fill="#e2e2e2"/><path d="M-4.6 -1.4H4.6" stroke="#535353" stroke-width="0.5"/></g>
<g transform="translate(853.80 155.00)" ><path d="M-1.45 -2.9L1.45 0L-1.45 2.9" fill="none" stroke="#c6c6c6" stroke-width="0.9"/></g>
<g transform="translate(864.20 155.00)" style="transform-origin:0 0"><path d="M-4.6 -3.4H-1.2L-0.2 -2.3H4.6V3.4H-4.6Z" fill="#e2e2e2"/><path d="M-4.6 -1.4H4.6" stroke="#535353" stroke-width="0.5"/></g>
<g transform="translate(853.80 174.00)" ><path d="M-1.45 -2.9L1.45 0L-1.45 2.9" fill="none" stroke="#c6c6c6" stroke-width="0.9"/></g>
<g transform="translate(864.20 174.00)" style="transform-origin:0 0"><path d="M-4.6 -3.4H-1.2L-0.2 -2.3H4.6V3.4H-4.6Z" fill="#e2e2e2"/><path d="M-4.6 -1.4H4.6" stroke="#535353" stroke-width="0.5"/></g>
<g transform="translate(853.80 193.00)" ><path d="M-1.45 -2.9L1.45 0L-1.45 2.9" fill="none" stroke="#c6c6c6" stroke-width="0.9"/></g>
<g transform="translate(864.20 193.00)" style="transform-origin:0 0"><path d="M-4.6 -3.4H-1.2L-0.2 -2.3H4.6V3.4H-4.6Z" fill="#e2e2e2"/><path d="M-4.6 -1.4H4.6" stroke="#535353" stroke-width="0.5"/></g>
<g transform="translate(993.80 114.60)" ><path d="M-1.5 0.75L0 -0.75L1.5 0.75" fill="none" stroke="#8a8a8a" stroke-width="0.8"/></g>
<g transform="translate(993.80 197.60)" ><path d="M-1.5 -0.75L0 0.75L1.5 -0.75" fill="none" stroke="#8a8a8a" stroke-width="0.8"/></g>
<g transform="translate(939.60 213.80)" style="transform-origin:0 0"><path d="M-4.6 -3.4H-1.2L-0.2 -2.3H4.6V3.4H-4.6Z" fill="#e2e2e2"/><path d="M-4.6 -1.4H4.6" stroke="#535353" stroke-width="0.5"/></g>
<g transform="translate(958.00 213.80)" ><rect x="-3.8" y="-3.8" width="7.6" height="7.6" fill="none" stroke="#e2e2e2" stroke-width="1"/><path d="M-2 0H2M0 -2V2" stroke="#e2e2e2" stroke-width="1"/></g>
<g transform="translate(977.50 213.80)" ><path d="M-3.6 -2.6H3.6V-1.7H-3.6Z M-1.4 -3.7H1.4V-2.8H-1.4Z M-2.9 -1.2H2.9L2.5 4H-2.5Z" fill="#858585"/><path d="M-1.2 -0.4V3.2M0 -0.4V3.2M1.2 -0.4V3.2" stroke="#535353" stroke-width="0.5"/></g>
<g transform="translate(993.30 232.40)" ><path d="M-2.6 -1.8H2.6M-2.6 -0.6H2.6M-2.6 0.6H2.6M-2.6 1.8H2.6" stroke="#b8b8b8" stroke-width="0.7"/></g>
<g transform="translate(856.20 253.80)" ><circle cx="-0.80" cy="-0.80" r="2.3" fill="none" stroke="#dcdcdc" stroke-width="1.0"/><path d="M0.92 0.92L3.33 3.33" stroke="#dcdcdc" stroke-width="1.30" stroke-linecap="round"/></g>
<g transform="translate(899.80 254.40)" ><path d="M-1.6 -0.8L0 0.8L1.6 -0.8" fill="none" stroke="#b0b0b0" stroke-width="0.9"/></g>
<g transform="translate(917.00 253.60)" ><rect x="-3.6" y="-3.1" width="7.2" height="6.2" fill="none" stroke="#e6e6e6" stroke-width="0.9"/><path d="M-2.6 2.2L-0.6 -0.4L0.8 1L1.6 0.2L2.8 2.2Z" fill="#e6e6e6"/><circle cx="1.6" cy="-1.4" r="0.7" fill="#e6e6e6"/></g>
<g transform="translate(932.00 253.60)" ><circle r="3.5" fill="none" stroke="#e6e6e6" stroke-width="0.9"/><path d="M2.55 -2.55A3.6 3.6 0 0 1 -2.55 2.55Z" fill="#e6e6e6"/></g>
<text x="947.9" y="256.8" text-anchor="middle" font-family="Liberation Serif, serif" font-weight="bold" font-size="9.6" fill="#e6e6e6">T</text>
<g transform="translate(963.80 253.60)" ><rect x="-2.8" y="-2.8" width="5.6" height="5.6" fill="none" stroke="#e6e6e6" stroke-width="0.9"/><rect x="-4" y="-4" width="2.2" height="2.2" fill="#e6e6e6"/><rect x="1.8" y="-4" width="2.2" height="2.2" fill="#e6e6e6"/><rect x="-4" y="1.8" width="2.2" height="2.2" fill="#e6e6e6"/><rect x="1.8" y="1.8" width="2.2" height="2.2" fill="#e6e6e6"/></g>
<g transform="translate(979.60 253.40)" ><path d="M-1.4 -3.8H1.2L3.4 -1.6V3.8H0" fill="none" stroke="#e6e6e6" stroke-width="0.9"/><rect x="-3.6" y="-0.4" width="4.4" height="4.4" fill="#e6e6e6"/><path d="M-2.6 -0.4V-1.6A1.2 1.2 0 0 1 -0.2 -1.6V-0.4" fill="none" stroke="#e6e6e6" stroke-width="0.8"/></g>
<rect x="990.8" y="249" width="5.2" height="9.4" rx="1" fill="#4a4a4a" stroke="#3e3e3e" stroke-width="0.5"/>
<circle cx="993.4" cy="250.6" r="2.4" fill="#f4f4f4"/>
<g transform="translate(927.60 272.60)" ><path d="M-1.6 -0.8L0 0.8L1.6 -0.8" fill="none" stroke="#b0b0b0" stroke-width="0.9"/></g>
<g transform="translate(991.80 272.60)" ><path d="M-1.5 -0.75L0 0.75L1.5 -0.75" fill="none" stroke="#b0b0b0" stroke-width="0.9"/></g>
<g transform="translate(991.80 290.80)" ><path d="M-1.5 -0.75L0 0.75L1.5 -0.75" fill="none" stroke="#b0b0b0" stroke-width="0.9"/></g>
<g transform="translate(875.20 290.40)" ><rect x="-3.9" y="-3.9" width="7.8" height="7.8" fill="#606060"/><path d="M-3.9 -3.9h2.6v2.6h-2.6zM1.3 -3.9h2.6v2.6h-2.6zM-1.3 -1.3h2.6v2.6h-2.6zM-3.9 1.3h2.6v2.6h-2.6zM1.3 1.3h2.6v2.6h-2.6z" fill="#f2f2f2"/></g>
<g transform="translate(889.80 290.60)" ><g transform="scale(0.86)"><path d="M5.1 -5.3Q6 -4.4 5.1 -3.3L0 2L-2.2 -0.2L3.3 -5.1Q4.3 -6 5.1 -5.3Z" fill="#e6e6e6"/><path d="M-2.8 0.4L-0.6 2.6Q-1 5 -5.2 5Q-3.8 3.6 -4 2.2Q-3.9 0.7 -2.8 0.4Z" fill="#e6e6e6"/></g></g>
<g transform="translate(903.70 290.40)" ><g transform="scale(0.9)"><path d="M0 -5L1.9 -2.9H0.6V-0.6H2.9V-1.9L5 0L2.9 1.9V0.6H0.6V2.9H1.9L0 5L-1.9 2.9H-0.6V0.6H-2.9V1.9L-5 0L-2.9 -1.9V-0.6H-0.6V-2.9H-1.9Z" fill="#e6e6e6"/></g></g>
<g transform="translate(917.80 290.40)" ><path d="M-2.6 -4.4V2.8H4.4M-4.4 -2.6H1.4M2.8 -0.2V4.4" fill="none" stroke="#e6e6e6" stroke-width="0.8"/><path d="M0.6 -3.8Q3.2 -3.4 3.8 -0.6" fill="none" stroke="#e6e6e6" stroke-width="0.8"/><path d="M2.4 -4.6L4.6 -4.4L4.2 -2.4Z" fill="#e6e6e6"/></g>
<g transform="translate(932.40 289.90)" ><rect x="-3.3" y="-0.6" width="6.6" height="4.9" rx="0.6" fill="#e6e6e6"/><path d="M-2 -0.6V-2.2A2 2 0 0 1 2 -2.2V-0.6" fill="none" stroke="#e6e6e6" stroke-width="1"/><rect x="-0.5" y="0.9" width="1" height="1.8" fill="#535353"/></g>
<defs><radialGradient id="tg1" cx="0.36" cy="0.78" r="0.3" gradientTransform="scale(1 1)"><stop offset="0" stop-color="#35e0c4"/><stop offset="0.45" stop-color="#1c8f7d"/><stop offset="1" stop-color="#0c1a14" stop-opacity="0"/></radialGradient><linearGradient id="tg2" x1="0" x2="0" y1="0" y2="1"><stop offset="0" stop-color="#141a10"/><stop offset="0.55" stop-color="#0d1712"/><stop offset="1" stop-color="#145045"/></linearGradient></defs>
<path d="M867 305.6V302.3H874.4M883.4 302.3H890.8V305.6M890.8 312.2V315.5H883.4M874.4 315.5H867V312.2" fill="none" stroke="#c3d3e6" stroke-width="0.8"/>
<rect x="868.5" y="303.4" width="20.4" height="10.7" fill="#020308"/>
<rect x="868.9" y="321.6" width="20" height="10.1" fill="url(#tg2)"/>
<rect x="868.9" y="321.6" width="20" height="10.1" fill="url(#tg1)"/>
<circle cx="871.2" cy="323.6" r="1.0" fill="#a89a3c" opacity="0.9"/>
<circle cx="873.6" cy="324.6" r="0.8" fill="#6f7d2e" opacity="0.9"/>
<circle cx="876.3" cy="323.4" r="1.0" fill="#d9c36a" opacity="0.9"/>
<circle cx="878.6" cy="324.4" r="0.8" fill="#8a7a34" opacity="0.9"/>
<circle cx="881" cy="323.6" r="0.9" fill="#c9b45a" opacity="0.8"/>
<circle cx="883.6" cy="324.6" r="0.9" fill="#5e7a3a" opacity="0.9"/>
<circle cx="886.2" cy="323.8" r="1.0" fill="#7a4a26" opacity="0.9"/>
<circle cx="874.8" cy="326.4" r="0.8" fill="#3e6a3a" opacity="0.8"/>
<circle cx="884.6" cy="327.2" r="1.0" fill="#2f8a6c" opacity="0.7"/>
<circle cx="880.6" cy="329.6" r="1.2" fill="#1f7a68" opacity="0.7"/>
<g transform="translate(856.00 309.30)" ><path d="M-4.3 0Q0 -4.6 4.3 0Q0 4.6 -4.3 0Z" fill="#f0f0f0"/><circle r="1.55" fill="#3a3a3a"/><circle r="0.6" cx="-0.3" cy="-0.4" fill="#f0f0f0"/></g>
<g transform="translate(856.00 326.70)" ><path d="M-4.3 0Q0 -4.6 4.3 0Q0 4.6 -4.3 0Z" fill="#f0f0f0"/><circle r="1.55" fill="#3a3a3a"/><circle r="0.6" cx="-0.3" cy="-0.4" fill="#f0f0f0"/></g>
<g transform="translate(975.20 327.20)" ><rect x="-2.9" y="-0.6" width="5.8" height="4.6" rx="0.5" fill="none" stroke="#d8d8d8" stroke-width="0.9"/><path d="M-1.8 -0.6V-2.3A1.8 1.8 0 0 1 1.8 -2.3V-0.6" fill="none" stroke="#d8d8d8" stroke-width="0.9"/><rect x="-0.45" y="0.9" width="0.9" height="1.6" fill="#d8d8d8"/></g>
<g transform="translate(960.20 313.40)" ><path d="M-2.2 -4.6Q-2.2 -5.6 -1.3 -5.6Q-0.4 -5.6 -0.4 -4.6V-1.6L2.8 -0.8Q3.8 -0.4 3.6 0.8L3 3.2Q2.8 4.2 1.8 4.2H-1Q-1.8 4.2 -2.4 3.4L-4.2 0.8Q-4.6 0 -3.8 -0.2Q-3 -0.4 -2.2 0.8Z" fill="#ffffff" stroke="#1a1a1a" stroke-width="0.6"/></g>
<g transform="translate(871.80 523.40)" ><rect x="-5" y="-1.9" width="5.6" height="3.8" rx="1.9" fill="none" stroke="#8a8a8a" stroke-width="0.9"/><rect x="-0.6" y="-1.9" width="5.6" height="3.8" rx="1.9" fill="none" stroke="#8a8a8a" stroke-width="0.9"/></g>
<text x="885.4" y="526.5" font-family="Liberation Serif, serif" font-style="italic" font-size="10.2" fill="#e6e6e6" textLength="8.6" lengthAdjust="spacingAndGlyphs">fx</text>
<path d="M893.6 527.9H896L894.8 529.3Z" fill="#e6e6e6"/>
<g transform="translate(907.00 523.20)" ><rect x="-4.3" y="-3.5" width="8.6" height="7" fill="#e6e6e6"/><circle r="1.9" fill="#535353"/></g>
<g transform="translate(924.40 523.20)" ><circle r="3.7" fill="none" stroke="#e6e6e6" stroke-width="0.9"/><path d="M2.6 -2.6A3.7 3.7 0 0 1 -2.6 2.6Z" fill="#e6e6e6"/></g>
<path d="M928.2 527.9H930.6L929.4 529.3Z" fill="#e6e6e6"/>
<g transform="translate(942.30 523.40)" style="transform-origin:0 0"><path d="M-4.6 -3.4H-1.2L-0.2 -2.3H4.6V3.4H-4.6Z" fill="#e2e2e2"/><path d="M-4.6 -1.4H4.6" stroke="#535353" stroke-width="0.5"/></g>
<g transform="translate(959.70 523.20)" ><rect x="-3.8" y="-3.8" width="7.6" height="7.6" fill="none" stroke="#e2e2e2" stroke-width="1"/><path d="M-2 0H2M0 -2V2" stroke="#e2e2e2" stroke-width="1"/></g>
<g transform="translate(977.20 523.40)" ><path d="M-3.6 -2.6H3.6V-1.7H-3.6Z M-1.4 -3.7H1.4V-2.8H-1.4Z M-2.9 -1.2H2.9L2.5 4H-2.5Z" fill="#e2e2e2"/><path d="M-1.2 -0.4V3.2M0 -0.4V3.2M1.2 -0.4V3.2" stroke="#535353" stroke-width="0.5"/></g>
<g transform="translate(172.00 525.40)" ><path d="M-0.85 -1.7L0.85 0L-0.85 1.7" fill="none" stroke="#a8a8a8" stroke-width="0.8"/></g>
<g transform="translate(184.60 525.40)" ><path d="M0.75 -1.5L-0.75 0L0.75 1.5" fill="none" stroke="#8a8a8a" stroke-width="0.8"/></g>
<g transform="translate(802.00 525.40)" ><path d="M-0.75 -1.5L0.75 0L-0.75 1.5" fill="none" stroke="#8a8a8a" stroke-width="0.8"/></g>
<g transform="translate(813.80 63.60)" ><path d="M-1.6 0.8L0 -0.8L1.6 0.8" fill="none" stroke="#9a9a9a" stroke-width="0.8"/></g>
<g transform="translate(813.80 513.80)" ><path d="M-1.6 -0.8L0 0.8L1.6 -0.8" fill="none" stroke="#9a9a9a" stroke-width="0.8"/></g>
</svg>
<div class="b" style="left:2px;top:2px;width:1px;height:529px;background:rgba(241,148,36,.4)"></div>
<div class="b" style="left:2px;top:2px;width:996px;height:1px;background:rgba(241,148,36,.5)"></div>
<div class="b" style="left:997px;top:2px;width:1px;height:529px;background:rgba(241,148,36,.3)"></div>
<div class="b" style="left:2px;top:530px;width:996px;height:1px;background:rgba(241,148,36,.55)"></div>
</body>
</html>
